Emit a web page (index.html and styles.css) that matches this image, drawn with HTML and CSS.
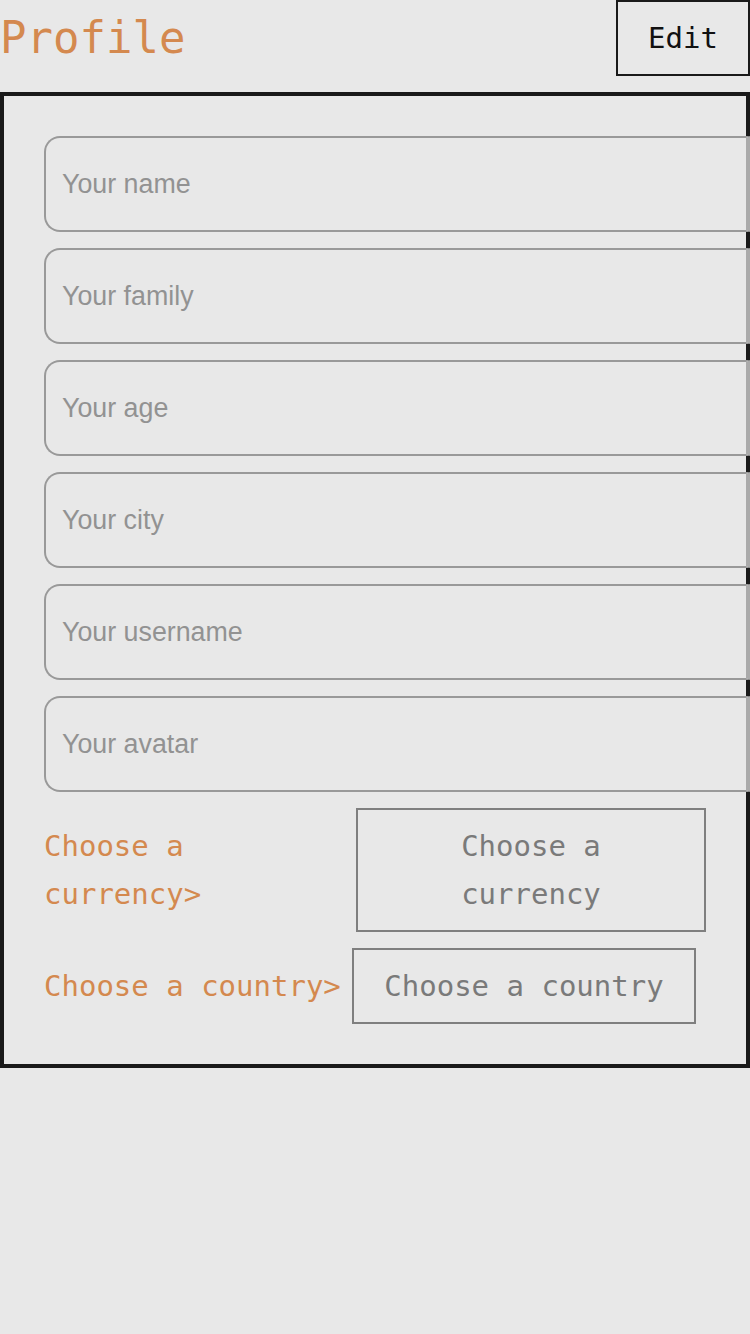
FILE: index.html
```html
<!DOCTYPE html>
<html lang="en">
<head>
<meta charset="utf-8">
<title>Profile</title>
<link rel="stylesheet" href="styles.css">
</head>
<body>
<header class="header">
  <h1 class="title">Profile</h1>
  <button class="btn btn-edit" type="button">Edit</button>
</header>
<main class="card">
  <input class="field" type="text" placeholder="Your name">
  <input class="field" type="text" placeholder="Your family">
  <input class="field" type="text" placeholder="Your age">
  <input class="field" type="text" placeholder="Your city">
  <input class="field" type="text" placeholder="Your username">
  <input class="field" type="text" placeholder="Your avatar">
  <div class="row">
    <span class="label label-currency">Choose a currency&gt;</span>
    <button class="btn btn-choose btn-currency" type="button">Choose a currency</button>
  </div>
  <div class="row">
    <span class="label label-country">Choose a country&gt;</span>
    <button class="btn btn-choose btn-country" type="button">Choose a country</button>
  </div>
</main>
</body>
</html>
```

FILE: styles.css
```css
* {
  box-sizing: border-box;
}

html, body {
  margin: 0;
  padding: 0;
  background: #e8e8e8;
  overflow-x: hidden;
}

body {
  width: 750px;
  font-family: "DejaVu Sans Mono", monospace;
}

.header {
  display: flex;
  justify-content: space-between;
  align-items: center;
  height: 76px;
  margin-bottom: 16px;
}

.title {
  margin: 0;
  font-family: "DejaVu Sans Mono", monospace;
  font-weight: normal;
  font-size: 44px;
  line-height: 1;
  color: #d4894f;
}

.btn {
  font-family: "DejaVu Sans Mono", monospace;
  font-size: 29px;
  line-height: 48px;
  background: transparent;
  padding: 12px 31px;
  margin: 0;
  border-radius: 0;
  cursor: pointer;
}

.btn-edit {
  width: 134px;
  height: 76px;
  border: 2px solid #1a1a1a;
  color: #111;
  padding: 12px 0;
  text-align: center;
}

.card {
  border: 4px solid #1a1a1a;
  padding: 40px;
  display: flex;
  flex-direction: column;
  gap: 16px;
}

.field {
  display: block;
  height: 96px;
  margin-right: -44px;
  padding: 0 16px;
  border: 2px solid #999;
  border-right: 4px solid #aaa;
  border-radius: 16px 0 0 16px;
  background: #e8e8e8;
  font-family: "Liberation Sans", Arial, sans-serif;
  font-size: 26.8px;
  color: #333;
  outline: none;
}

.field::placeholder {
  color: #929292;
}

.row {
  display: flex;
  align-items: center;
}

.label {
  font-size: 29px;
  line-height: 48px;
  color: #d4894f;
  flex: none;
}

.label-currency {
  width: 312px;
  padding-right: 24px;
}

.label-country {
  width: 308px;
  white-space: nowrap;
}

.btn-choose {
  border: 2px solid #7f7f7f;
  color: #7a7a7a;
  text-align: center;
  flex: none;
}

.btn-currency {
  width: 350px;
}

.btn-country {
  width: 344px;
  padding: 12px 0;
  white-space: nowrap;
}
```
